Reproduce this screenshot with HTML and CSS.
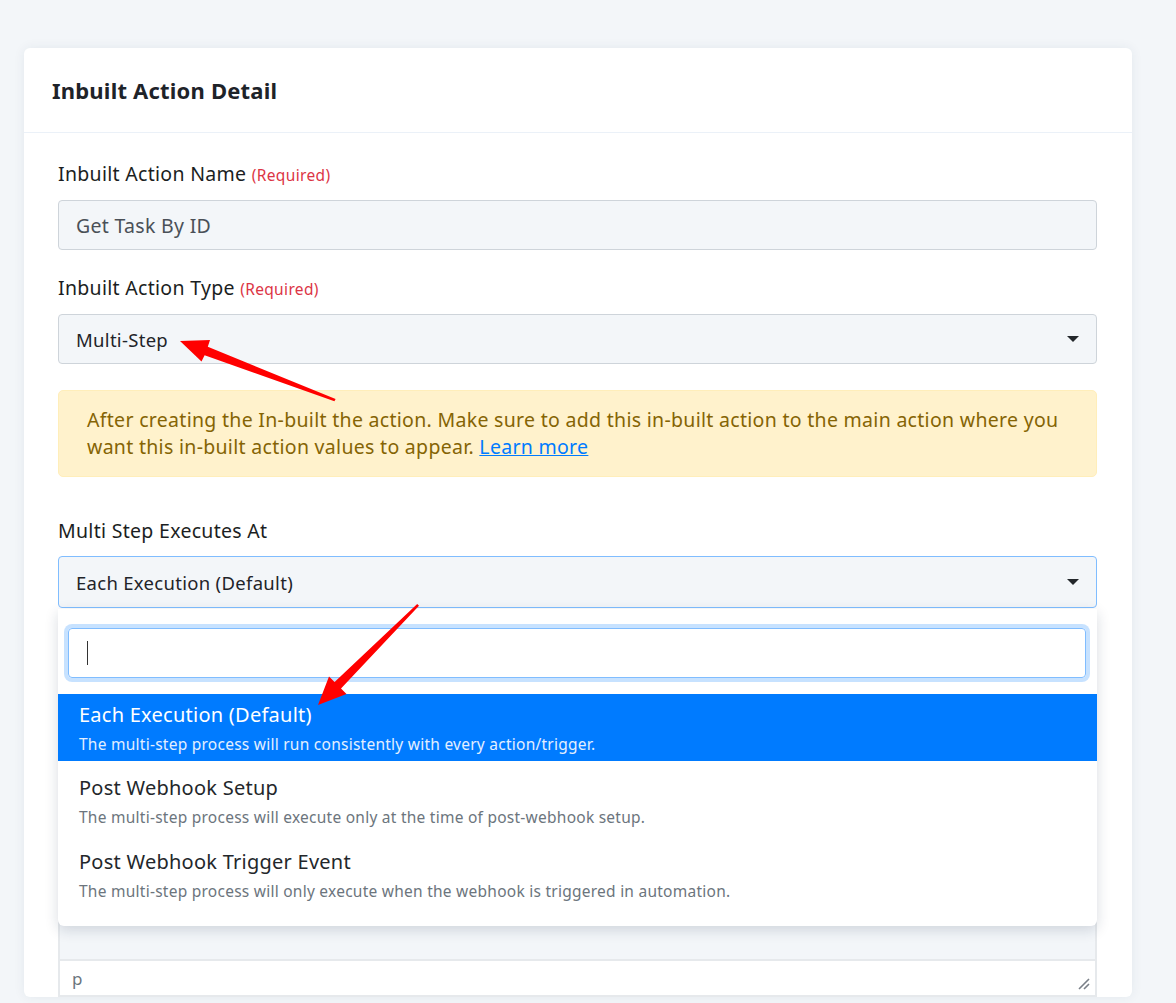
FILE: index.html
```html
<!DOCTYPE html>
<html lang="en">
<head>
    <meta charset="UTF-8">
    <meta name="viewport" content="width=device-width, initial-scale=1.0">
    <title>Inbuilt Action Detail</title>
    <link rel="stylesheet" href="styles.css">
</head>
<body>
    <div class="card">
        <div class="card-header">
            <h2>Inbuilt Action Detail</h2>
        </div>
        <div class="card-body">
            <div class="form-group">
                <label>Inbuilt Action Name <span class="req">(Required)</span></label>
                <div class="field readonly">Get Task By ID</div>
            </div>
            <div class="form-group">
                <label>Inbuilt Action Type <span class="req">(Required)</span></label>
                <div class="field select">Multi-Step<span class="caret"></span></div>
            </div>
            <div class="alert">
                After creating the In-built the action. Make sure to add this in-built action to the main action where you want this in-built action values to appear. <a href="#">Learn more</a>
            </div>
            <div class="form-group">
                <label>Multi Step Executes At</label>
                <div class="dropdown-wrap">
                    <div class="field select open">Each Execution (Default)<span class="caret"></span></div>
                    <div class="dropdown">
                        <div class="search"><span class="cursor"></span></div>
                        <ul class="options">
                            <li class="active">
                                <div class="opt-title">Each Execution (Default)</div>
                                <div class="opt-desc">The multi-step process will run consistently with every action/trigger.</div>
                            </li>
                            <li>
                                <div class="opt-title">Post Webhook Setup</div>
                                <div class="opt-desc">The multi-step process will execute only at the time of post-webhook setup.</div>
                            </li>
                            <li>
                                <div class="opt-title">Post Webhook Trigger Event</div>
                                <div class="opt-desc">The multi-step process will only execute when the webhook is triggered in automation.</div>
                            </li>
                        </ul>
                    </div>
                </div>
            </div>
            <div class="form-group last">
                <label>Description</label>
                <div class="editor">
                    <div class="editor-area"></div>
                    <div class="statusbar">
                        <span>p</span>
                        <svg class="grip" width="12" height="12" viewBox="0 0 12 12">
                            <path d="M11 1L1 11M11 6L6 11" stroke="#7a8088" stroke-width="1.6" fill="none"/>
                        </svg>
                    </div>
                </div>
            </div>
        </div>
    </div>

    <svg class="notes" width="1176" height="1003" viewBox="0 0 1176 1003">
        <polygon fill="#ff0000" points="180,341 210,340 207.8,346.8 335.6,399 334.4,401.2 204.6,355.2 201.5,361.5"/>
        <polygon fill="#ff0000" points="318,705 329,676.5 334.6,682 417.2,604 419,605.8 341,688.4 346.5,694"/>
    </svg>
</body>
</html>
```

FILE: styles.css
```css
body {
    margin: 0;
    background: #f3f6f9;
    font-family: 'Noto Sans', 'Lato', sans-serif;
    color: #212529;
    height: 1003px;
    overflow: hidden;
}
.card {
    margin: 48px 44px 0 24px;
    background: white;
    border-radius: 6px;
    box-shadow: 0 0 12px rgba(30, 50, 80, 0.07);
}
.card-header {
    height: 84px;
    padding: 0 28px;
    display: flex;
    align-items: center;
    border-bottom: 1px solid #ebf1f8;
}
.card-header h2 {
    margin: 0;
    font-size: 22px;
    font-weight: 700;
    letter-spacing: 0.2px;
    color: #1e2329;
}
.card-body {
    padding: 29px 35px 0 34px;
}
.form-group {
    margin-bottom: 26px;
}
.form-group.last {
    margin-bottom: 7px;
}
label {
    display: block;
    font-size: 19.5px;
    letter-spacing: 0.3px;
    line-height: 24px;
    margin-bottom: 13px;
    color: #1b1e22;
}
.req {
    color: #dc3545;
    font-size: 15.5px;
    letter-spacing: 0.35px;
}
.field {
    box-sizing: border-box;
    height: 50px;
    padding: 0 17px;
    display: flex;
    align-items: center;
    background: #f3f6f9;
    border: 1px solid #ced4da;
    border-radius: 4px;
    font-size: 19.5px;
    letter-spacing: 0.3px;
}
.readonly {
    color: #4a5057;
}
.select {
    position: relative;
    font-size: 18.5px;
    color: #1f2429;
}
.select.open {
    height: 52px;
    border-color: #80bdff;
}
.caret {
    position: absolute;
    right: 17px;
    top: 50%;
    margin-top: -3px;
    border-top: 6px solid #23272b;
    border-left: 6px solid transparent;
    border-right: 6px solid transparent;
}
.alert {
    background: #fff2cc;
    border: 1px solid #ffeeba;
    border-radius: 5px;
    padding: 15px 28px 16px;
    font-size: 19.5px;
    letter-spacing: 0.3px;
    line-height: 27px;
    color: #856404;
    margin-bottom: 42px;
}
.alert a {
    color: #007bff;
}
.dropdown-wrap {
    position: relative;
}
.dropdown {
    position: absolute;
    left: 0;
    right: 0;
    top: 53px;
    z-index: 5;
    background: white;
    border-radius: 0 0 6px 6px;
    box-shadow: 0 4px 14px rgba(20, 40, 70, 0.16);
    padding: 19px 0 17px;
}
.search {
    box-sizing: border-box;
    height: 50px;
    margin: 0 11px 0 10px;
    border: 1px solid #80bdff;
    border-radius: 4px;
    box-shadow: 0 0 0 4px rgba(0, 123, 255, 0.22);
    display: flex;
    align-items: center;
    padding-left: 18px;
}
.cursor {
    width: 1px;
    height: 24px;
    background: #333;
}
.options {
    list-style: none;
    margin: 16px 0 0;
    padding: 0;
}
.options li {
    height: 67px;
    box-sizing: border-box;
    padding: 8px 21px 0;
    margin-bottom: 7px;
}
.options li:last-child {
    margin-bottom: 0;
}
.options li.active {
    background: #007bff;
    padding-top: 9px;
}
.opt-title {
    font-size: 20px;
    letter-spacing: 0.25px;
    line-height: 24px;
    color: #23272b;
}
.opt-desc {
    font-size: 15.5px;
    letter-spacing: 0.25px;
    line-height: 20px;
    margin-top: 7px;
    color: #6c757d;
}
.active .opt-title {
    color: white;
}
.active .opt-desc {
    color: #e3efff;
}
.editor {
    border: 2px solid #e6e9ec;
    border-top: 0;
}
.editor-area {
    height: 288px;
    background: #f3f6f9;
    border-bottom: 2px solid #e6e9ec;
}
.statusbar {
    height: 34px;
    display: flex;
    align-items: center;
    justify-content: space-between;
    padding: 0 5px 0 12px;
    background: white;
    font-size: 17px;
    color: #6c757d;
}
.grip {
    margin-top: 12px;
}
.notes {
    position: absolute;
    left: 0;
    top: 0;
    pointer-events: none;
    z-index: 10;
}
```
